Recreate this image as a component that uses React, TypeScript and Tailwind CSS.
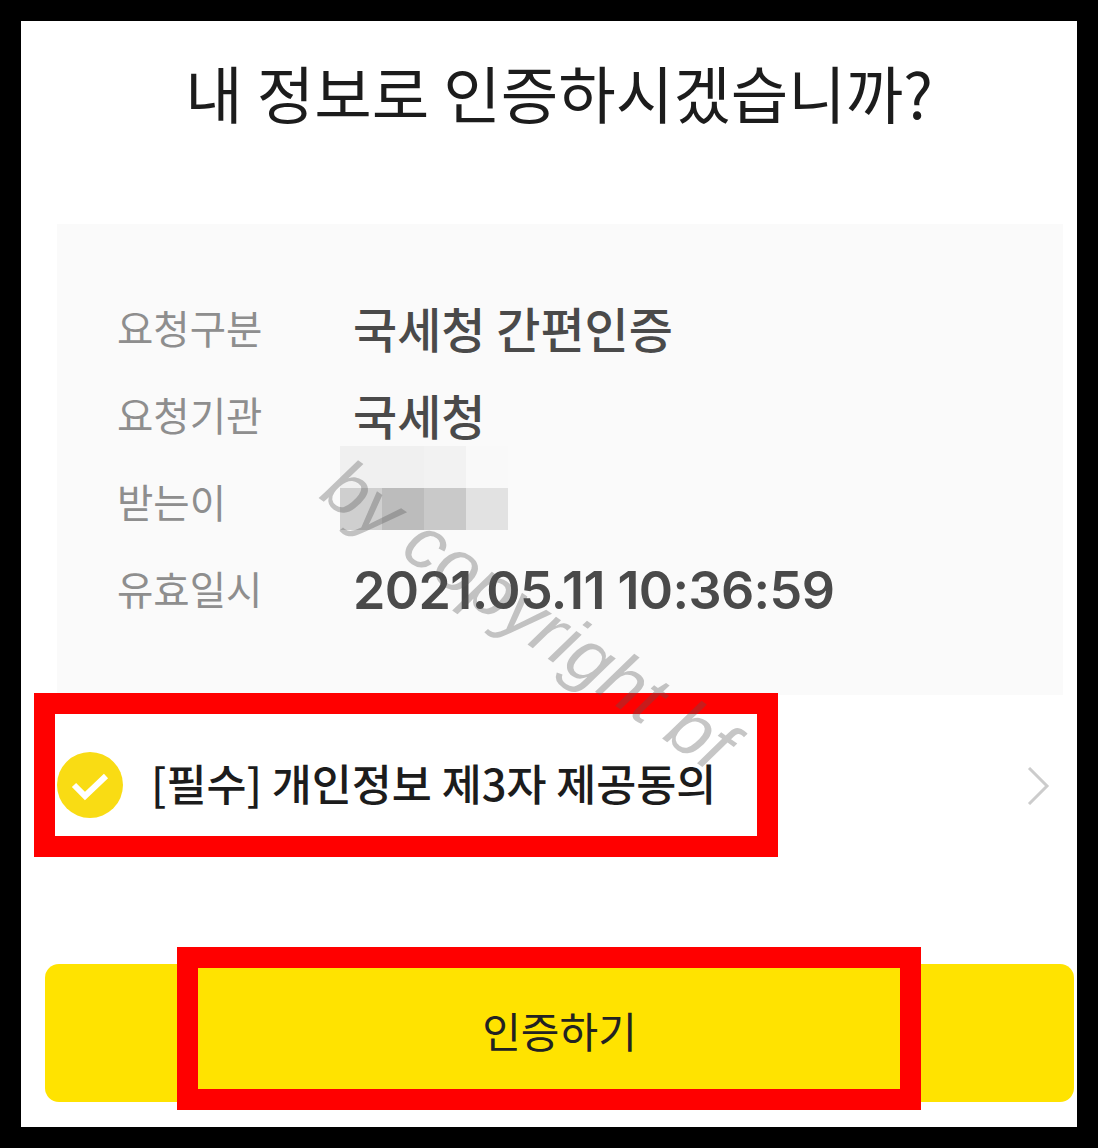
const rows = [
  { label: "요청구분", value: "국세청 간편인증" },
  { label: "요청기관", value: "국세청" },
  { label: "받는이", value: "" },
  { label: "유효일시", value: "2021.05.11 10:36:59" },
];

const blurCells = [
  "bg-[#f0f0f0]",
  "bg-[#f0f0f0]",
  "bg-[#f2f2f2]",
  "bg-[#f9f9f9]",
  "bg-[#cfcfcf]",
  "bg-[#bcbcbc]",
  "bg-[#c9c9c9]",
  "bg-[#e2e2e2]",
];

export default function App() {
  return (
    <div
      className="relative w-[1098px] h-[1148px] overflow-hidden bg-black p-[21px]"
      style={{ fontFamily: '"Noto Sans CJK KR", "Noto Sans", sans-serif' }}
    >
      <div className="flex flex-col h-[1106px] w-[1056px] bg-white">
        <h1 className="h-[203px] pt-[31px] pl-[20px] text-center text-[62.5px] leading-[80px] font-normal text-[#1c1c1c]">
          내 정보로 인증하시겠습니까?
        </h1>

        <div className="flex flex-col ml-[36px] w-[1006px] h-[471px] bg-[#fafafa] pt-[60px] pl-[60px]">
          {rows.map((row) => (
            <div key={row.label} className="flex items-center h-[87px]">
              <span className="w-[236px] text-[39.5px] text-[#8e8e8e] -mt-[2px]">{row.label}</span>
              {row.label === "받는이" ? (
                <div className="grid grid-cols-4 w-[168px] h-[84px] -ml-[13px] -mt-[28px]">
                  {blurCells.map((cell, i) => (
                    <div key={i} className={cell} />
                  ))}
                </div>
              ) : row.label === "유효일시" ? (
                <span className="text-[52px] font-semibold tracking-[-0.6px] text-[#4a4a4a] mt-[5px]" style={{ fontFamily: "Inter, sans-serif" }}>
                  {row.value}
                </span>
              ) : (
                <span className="text-[48px] font-medium text-[#4a4a4a] -mt-[2px]">{row.value}</span>
              )}
            </div>
          ))}
        </div>

        <div className="flex items-start h-[269px] pt-[57px] pl-[36px] pr-[27px]">
          <svg width="66" height="66" viewBox="0 0 66 66">
            <circle cx="33" cy="33" r="33" fill="#f9dc14" />
            <path d="M17 33 L28 44 L49 24" fill="none" stroke="#ffffff" strokeWidth="6" />
          </svg>
          <span className="ml-[28px] -mt-[1px] text-[43.5px] leading-[64px] font-medium text-[#1c1c1c]">
            [필수] 개인정보 제3자 제공동의
          </span>
          <svg className="ml-auto mt-[15px]" width="24" height="38" viewBox="0 0 24 38">
            <path d="M3 1 L21 19 L3 37" fill="none" stroke="#cccccc" strokeWidth="3" />
          </svg>
        </div>

        <button className="ml-[24px] w-[1029px] h-[138px] pb-[8px] rounded-[14px] bg-[#ffe300] text-[42px] text-[#222222]">
          인증하기
        </button>
      </div>

      {/* red annotation boxes */}
      <div className="absolute left-[34px] top-[693px] w-[744px] h-[164px] border-[21px] border-[#ff0000]" />
      <div className="absolute left-[177px] top-[947px] w-[744px] h-[163px] border-[21px] border-[#ff0000]" />

      {/* watermark */}
      <div
        className="absolute left-[332px] top-[440px] origin-left rotate-[35deg] whitespace-nowrap text-[74px] italic leading-none text-[#55555555]"
        style={{ fontFamily: '"Liberation Sans", sans-serif' }}
      >
        by copyright bf
      </div>
    </div>
  );
}
